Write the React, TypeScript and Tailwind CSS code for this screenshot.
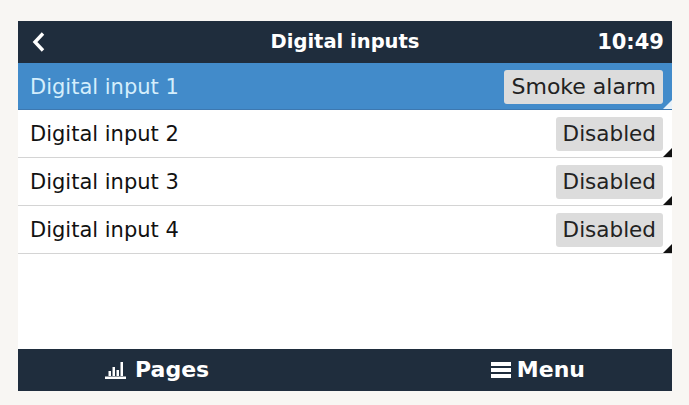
const font = { fontFamily: '"DejaVu Sans", sans-serif' };

const rows = [
  { name: 'Digital input 1', value: 'Smoke alarm', selected: true },
  { name: 'Digital input 2', value: 'Disabled', selected: false },
  { name: 'Digital input 3', value: 'Disabled', selected: false },
  { name: 'Digital input 4', value: 'Disabled', selected: false },
];

function Row({ name, value, selected }: { name: string; value: string; selected: boolean }) {
  return (
    <div
      className={
        selected
          ? 'relative flex h-[47px] items-center justify-between border-b border-[#3d78b0] bg-[#428bca] pl-3 pr-[9px] pt-[2px] text-[#d4eefc]'
          : 'relative flex h-[48px] items-center justify-between border-b border-[#d4d4d4] bg-white pl-3 pr-[9px] text-[#111]'
      }
    >
      <span className="text-[21px] leading-[24px]">{name}</span>
      <span
        className={
          selected
            ? 'rounded-[3px] bg-[#dcdcdc] px-[7px] py-[5px] text-[22px] leading-[24px] text-[#222]'
            : 'rounded-[3px] bg-[#dcdcdc] px-[7px] py-[5px] text-[21.5px] leading-[24px] text-[#222]'
        }
      >
        {value}
      </span>
      {/* corner arrow */}
      <svg className="absolute bottom-0 right-0 h-[9px] w-[9px]" viewBox="0 0 9 9">
        <polygon points="9,0 9,9 0,9" fill={selected ? '#e8f2fa' : '#111'} />
      </svg>
    </div>
  );
}

export default function App() {
  return (
    <div style={font} className="flex h-[405px] w-[689px] flex-col bg-[#f8f6f3] pl-[18px] pr-[17px] pt-[21px] pb-[14px]">
      <div className="flex flex-1 flex-col overflow-hidden bg-white">
        <div className="relative flex h-[42px] shrink-0 items-center justify-between bg-[#1f2d3d] pl-[13px] pr-[8px] text-white">
          <svg width="15" height="22" viewBox="0 0 15 22" fill="none">
            <path d="M12 2.5 L4 11 L12 19.5" stroke="white" strokeWidth="3.4" />
          </svg>
          <span className="text-[21px] font-bold leading-none">10:49</span>
          <span className="absolute left-0 right-0 text-center text-[19.5px] font-bold leading-none">
            Digital inputs
          </span>
        </div>
        <div className="flex flex-1 flex-col">
          {rows.map((r) => (
            <Row key={r.name} {...r} />
          ))}
        </div>
        <div className="flex h-[42px] shrink-0 items-center justify-between bg-[#1f2d3d] px-[87px] text-white">
          <div className="flex items-center gap-[9px]">
            <svg width="21" height="20" viewBox="0 0 21 20" fill="white">
              <rect x="0" y="16.5" width="21" height="2.5" />
              <rect x="3.5" y="11" width="2.5" height="5" />
              <rect x="7.5" y="7" width="2.5" height="9" />
              <rect x="11.5" y="10" width="2.5" height="6" />
              <rect x="15.5" y="2" width="2.5" height="14" />
            </svg>
            <span className="text-[22px] font-bold leading-none">Pages</span>
          </div>
          <div className="flex items-center gap-[6px]">
            <svg width="20" height="20" viewBox="0 0 20 20" fill="white">
              <rect x="0" y="2" width="20" height="4" />
              <rect x="0" y="8" width="20" height="4" />
              <rect x="0" y="14" width="20" height="4" />
            </svg>
            <span className="text-[22px] font-bold leading-none">Menu</span>
          </div>
        </div>
      </div>
    </div>
  );
}
